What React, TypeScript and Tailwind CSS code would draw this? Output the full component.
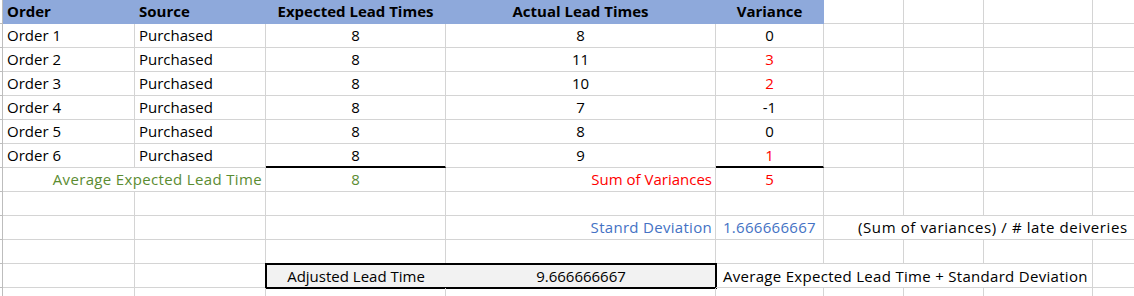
import React from 'react';

const font = { fontFamily: '"Open Sans", "Liberation Sans", sans-serif' };

// column widths incl. right gridline
const W = [132, 131, 180, 270, 108, 80, 80, 109, 42];

type Cell = {
  span?: number;
  text?: string;
  align?: 'left' | 'center' | 'right';
  color?: string;
  bold?: boolean;
  fill?: string;
  thickBottom?: boolean;
  pl?: string;
  extra?: string;
};

function cellWidth(start: number, span: number) {
  let w = 0;
  for (let i = start; i < start + span; i++) w += W[i];
  return w;
}

function Row({ cells, header }: { cells: Cell[]; header?: boolean }) {
  let col = 0;
  return (
    <div className="flex h-[24px]">
      <div className="w-[3px] shrink-0 border-r border-b border-[#bdbdbd] bg-white" />
      {cells.map((c, i) => {
        const span = c.span ?? 1;
        const w = cellWidth(col, span);
        col += span;
        const justify =
          c.align === 'center' ? 'justify-center' : c.align === 'right' ? 'justify-end pr-[3px]' : 'justify-start';
        return (
          <div
            key={i}
            style={{ width: w }}
            className={`shrink-0 flex items-center whitespace-nowrap overflow-visible border-r border-b ${
              c.fill ? 'bg-[#8ea9db] border-[#8ea9db]' : 'border-[#d4d4d4]'
            } ${c.thickBottom ? 'border-b-2 border-b-black' : ''} ${justify} ${c.pl ?? (c.align ? '' : 'pl-[4px]')} ${
              c.bold || header ? 'font-bold' : ''
            } ${c.color ?? 'text-black'} ${c.extra ?? ''}`}
          >
            {c.text}
          </div>
        );
      })}
    </div>
  );
}

const blank = (n: number): Cell[] => Array.from({ length: n }, () => ({}));

const orders = [
  { a: 8, b: 8, v: '0', red: false },
  { a: 8, b: 11, v: '3', red: true },
  { a: 8, b: 10, v: '2', red: true },
  { a: 8, b: 7, v: '-1', red: false },
  { a: 8, b: 8, v: '0', red: false },
  { a: 8, b: 9, v: '1', red: true },
];

export default function App() {
  return (
    <div className="w-[1134px] h-[296px] overflow-hidden bg-white text-[15px] leading-none" style={font}>
      <Row
        header
        cells={[
          { text: 'Order', fill: 'y' },
          { text: 'Source', fill: 'y' },
          { text: 'Expected Lead Times', align: 'center', fill: 'y' },
          { text: 'Actual Lead Times', align: 'center', fill: 'y' },
          { text: 'Variance', align: 'center', fill: 'y' },
          ...blank(4),
        ]}
      />
      {orders.map((o, i) => (
        <Row
          key={i}
          cells={[
            { text: `Order ${i + 1}` },
            { text: 'Purchased' },
            { text: String(o.a), align: 'center', thickBottom: i === 5 },
            { text: String(o.b), align: 'center' },
            {
              text: o.v,
              align: 'center',
              color: o.red ? 'text-[#ff0000]' : 'text-black',
              thickBottom: i === 5,
            },
            ...blank(4),
          ]}
        />
      ))}
      <Row
        cells={[
          {
            span: 2,
            text: 'Average Expected Lead Time',
            align: 'right',
            color: 'text-[#5b8c32]',
            extra: 'tracking-[0.35px]',
          },
          { text: '8', align: 'center', color: 'text-[#5b8c32]' },
          { text: 'Sum of Variances', align: 'right', color: 'text-[#ff0000]' },
          { text: '5', align: 'center', color: 'text-[#ff0000]' },
          ...blank(4),
        ]}
      />
      <Row cells={blank(9)} />
      <Row
        cells={[
          ...blank(3),
          { text: 'Stanrd Deviation', align: 'right', color: 'text-[#4472c4]', extra: 'tracking-[0.3px]' },
          { text: '1.666666667', align: 'center', color: 'text-[#4472c4]', extra: 'tracking-[0.3px]' },
          {
            span: 4,
            text: '(Sum of variances) / # late deiveries',
            pl: 'pl-[34px]',
            extra: 'tracking-[0.6px]',
          },
        ]}
      />
      <Row cells={blank(9)} />
      {/* Adjusted lead time row */}
      <div className="flex h-[24px]">
        <div className="w-[3px] shrink-0 border-r border-b border-[#bdbdbd]" />
        <div className="w-[132px] shrink-0 border-r border-b border-[#d4d4d4]" />
        <div className="w-[131px] shrink-0 border-r border-b border-[#d4d4d4]" />
        <div className="w-[450px] shrink-0 flex bg-[#f2f2f2] outline-2 outline-black -outline-offset-1">
          <div className="w-[180px] flex items-center justify-center pt-px">Adjusted Lead Time</div>
          <div className="w-[270px] flex items-center justify-center pt-px">9.666666667</div>
        </div>
        <div className="w-[377px] shrink-0 flex items-center pl-[7px] pt-px whitespace-nowrap tracking-[0.3px] border-r border-b border-[#d4d4d4]">
          Average Expected Lead Time + Standard Deviation
        </div>
        <div className="w-[42px] shrink-0 border-r border-b border-[#d4d4d4]" />
      </div>
      <Row cells={blank(9)} />
    </div>
  );
}
